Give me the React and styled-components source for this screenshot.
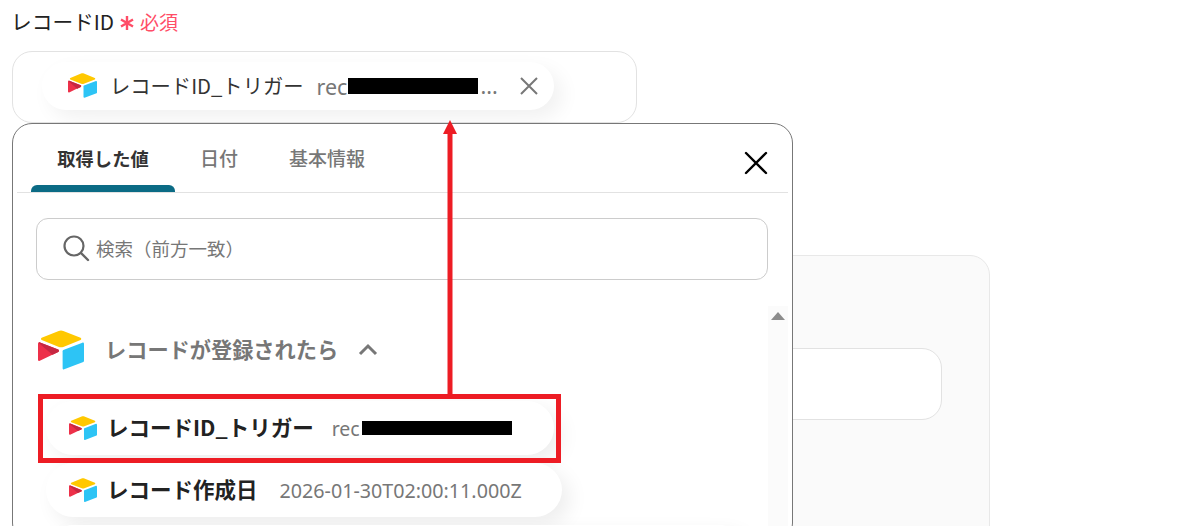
import React from 'react'
import styled, { createGlobalStyle } from 'styled-components'

const GlobalStyle = createGlobalStyle`
  html, body {
    margin: 0;
    height: 526px;
    overflow: hidden;
    background: #fff;
  }
  body {
    font-family: "Noto Sans CJK JP", "Noto Sans", sans-serif;
    color: #222;
  }
  * {
    box-sizing: border-box;
  }
`

const Page = styled.div`
  position: relative;
  width: 1198px;
  height: 526px;
  padding: 8px 12px 0;
  overflow: hidden;
`

const Label = styled.div`
  display: flex;
  align-items: center;
  gap: 5px;
  height: 27px;
  margin-left: -1px;
  font-size: 20.7px;
  line-height: 27px;
`

const Required = styled.span`
  display: flex;
  align-items: center;
  gap: 5px;
  color: #ff4d67;
  font-size: 19px;
`

const Asterisk = styled.svg`
  width: 16px;
  height: 16px;
  margin-top: 3px;
`

const FieldBlock = styled.div`
  position: relative;
  margin-top: 16px;
  width: 625px;
`

const Field = styled.div`
  height: 72px;
  padding: 10px 29px;
  background: #fff;
  border: 1px solid #e2e2e2;
  border-radius: 20px;
`

const Chip = styled.div`
  display: flex;
  align-items: center;
  width: 512px;
  height: 48px;
  padding-left: 26px;
  background: #fff;
  border-radius: 24px;
  box-shadow: 8px 8px 20px rgba(0, 0, 0, 0.06);
`

const ChipName = styled.span`
  margin: 0 0 3px 13px;
  font-size: 20.3px;
  color: #333;
  white-space: nowrap;
`

const Value = styled.span`
  display: flex;
  align-items: center;
  margin-left: ${(p) => p.$gap}px;
  font-family: "Noto Sans", sans-serif;
  font-size: ${(p) => p.$size}px;
  color: #777;
  white-space: nowrap;
`

const Redacted = styled.span`
  display: block;
  width: ${(p) => p.$width}px;
  height: ${(p) => p.$height}px;
  margin-left: ${(p) => p.$inset}px;
  background: #000;
`

const Dots = styled.span`
  margin-left: 2px;
  line-height: 1;
`

const ChipClose = styled.svg`
  width: 20px;
  height: 20px;
  margin-left: 21px;
  flex: none;
`

const Popover = styled.div`
  position: absolute;
  z-index: 2;
  top: 72px;
  left: 0;
  width: 781px;
  height: 420px;
  background: #fff;
  border: 1px solid #777;
  border-radius: 20px;
  padding: 0 4px;
`

const TabBar = styled.div`
  position: relative;
  display: flex;
  align-items: flex-end;
  height: 69px;
  border-bottom: 1px solid #e2e2e2;
`

const Tabs = styled.div`
  display: flex;
  padding-left: 14px;
`

const Tab = styled.div`
  position: relative;
  width: ${(p) => p.$width}px;
  height: 68px;
  padding-top: 20px;
  text-align: center;
  font-size: ${(p) => (p.$active ? 18.3 : 19)}px;
  line-height: 28px;
  font-weight: ${(p) => (p.$active ? 700 : 500)};
  color: ${(p) => (p.$active ? '#333' : '#777')};

  &::after {
    content: "";
    display: ${(p) => (p.$active ? 'block' : 'none')};
    position: absolute;
    left: 0;
    right: 0;
    bottom: 0;
    height: 7px;
    background: #0b6b85;
    border-radius: 6px 6px 0 0;
  }
`

const PopoverClose = styled.svg`
  position: absolute;
  top: 27px;
  right: 20px;
  width: 24px;
  height: 24px;
`

const SearchBox = styled.div`
  display: flex;
  align-items: center;
  gap: 6px;
  width: 732px;
  height: 62px;
  margin: 25px 0 0 19px;
  padding: 0 0 2px 25px;
  border: 1px solid #ccc;
  border-radius: 12px;
  font-size: 18.5px;
  color: #777;
`

const SearchIcon = styled.svg`
  width: 28px;
  height: 28px;
`

const ListArea = styled.div`
  position: relative;
  display: flow-root;
  margin-top: 26px;
  height: 220px;
`

const Scrollbar = styled.div`
  position: absolute;
  top: 0;
  right: 0;
  width: 20px;
  height: 100%;
  background: #fbfbfb;
  display: flex;
  justify-content: center;
  padding-top: 6px;
`

const ScrollUp = styled.div`
  width: 0;
  height: 0;
  border-left: 7px solid transparent;
  border-right: 7px solid transparent;
  border-bottom: 8px solid #8c8c8c;
`

const SectionHeader = styled.div`
  display: flex;
  align-items: center;
  height: 50px;
  margin: 19px 0 0 21px;
  font-size: 21.2px;
  font-weight: 700;
  color: #777;
`

const SectionTitle = styled.span`
  margin: 0 0 3px 21px;
`

const Chevron = styled.svg`
  width: 22px;
  height: 22px;
  margin-left: 19px;
`

const Rows = styled.div`
  display: flex;
  flex-direction: column;
  gap: 8px;
  margin: 26px 0 0 29px;
`

const Row = styled.div`
  display: flex;
  align-items: center;
  width: ${(p) => p.$width}px;
  height: 54px;
  padding-left: 23px;
  flex: none;
  background: #fff;
  border-radius: 27px;
  box-shadow: 8px 8px 20px rgba(0, 0, 0, 0.07);
`

const RowName = styled.span`
  margin: 0 0 3px 10px;
  font-size: 21.5px;
  font-weight: 700;
  color: #222;
  white-space: nowrap;
`

const Backdrop = styled.div`
  width: 978px;
  height: 340px;
  margin-top: 132px;
  padding: 92px 47px 0 0;
  background: #fafafa;
  border: 1px solid #e8e8e8;
  border-radius: 20px;
`

const BackdropInput = styled.div`
  height: 72px;
  background: #fff;
  border: 1px solid #e2e2e2;
  border-radius: 20px;
`

const Annotation = styled.svg`
  position: absolute;
  z-index: 3;
  top: 115px;
  left: 440px;
  width: 20px;
  height: 285px;
`

const Highlight = styled.div`
  position: absolute;
  z-index: 3;
  top: 394px;
  left: 38px;
  width: 523px;
  height: 69px;
  border: 5px solid #ed1c24;
`

function AirtableLogo ({ size }) {
  return (
    <svg width={size} height={size * 0.87} viewBox="0 0 200 174" style={{ flex: 'none' }}>
      <path fill="#ffc800" d="M90 4 16 34c-4 2-4 8 0 10l75 30c6 2 13 2 19 0l75-30c4-2 4-8 0-10L110 4c-6-3-14-3-20 0z" />
      <path fill="#2dc4f5" d="M107 92v74c0 4 4 6 7 5l83-32c2-1 3-3 3-5V60c0-4-4-6-7-5l-83 32c-2 1-3 3-3 5z" />
      <path fill="#ed3049" d="M88 96 63 108l-3 1-52 25c-3 2-8-1-8-5V59c0-1 1-3 2-4s1-1 2-1c1-1 3-1 5 0l79 31c4 2 4 9 0 11z" />
      <path fill="#c62842" d="M88 96 63 108 2 55c1-1 1-1 2-1 1-1 3-1 5 0l79 31c4 2 4 9 0 11z" />
    </svg>
  )
}

export default function App () {
  return (
    <Page>
      <GlobalStyle />
      <Label>
        レコードID
        <Required>
          <Asterisk viewBox="0 0 16 16">
            <path d="M8 1v14M2 4.5l12 7M14 4.5l-12 7" stroke="#ff4d67" strokeWidth="2.4" fill="none" />
          </Asterisk>
          必須
        </Required>
      </Label>
      <FieldBlock>
        <Field>
          <Chip>
            <AirtableLogo size={29} />
            <ChipName>レコードID_トリガー</ChipName>
            <Value $gap={13} $size={21.5}>
              rec<Redacted $inset={1} $width={130} $height={16} /><Dots>...</Dots>
            </Value>
            <ChipClose viewBox="0 0 20 20">
              <path d="M2 2l16 16M18 2 2 18" stroke="#777" strokeWidth="2" fill="none" />
            </ChipClose>
          </Chip>
        </Field>
        <Popover>
          <TabBar>
            <Tabs>
              <Tab $active $width={144}>取得した値</Tab>
              <Tab $width={88}>日付</Tab>
              <Tab $width={128}>基本情報</Tab>
            </Tabs>
            <PopoverClose viewBox="0 0 24 24">
              <path d="M2 2l20 20M22 2 2 22" stroke="#000" strokeWidth="2.4" strokeLinecap="round" fill="none" />
            </PopoverClose>
          </TabBar>
          <SearchBox>
            <SearchIcon viewBox="0 0 28 28">
              <circle cx="12" cy="12" r="9.5" stroke="#666" strokeWidth="2.2" fill="none" />
              <path d="M19 19l7 7" stroke="#666" strokeWidth="2.4" strokeLinecap="round" />
            </SearchIcon>
            検索（前方一致）
          </SearchBox>
          <ListArea>
            <Scrollbar><ScrollUp /></Scrollbar>
            <SectionHeader>
              <AirtableLogo size={46} />
              <SectionTitle>レコードが登録されたら</SectionTitle>
              <Chevron viewBox="0 0 22 22">
                <path d="M3 15l8-8 8 8" stroke="#777" strokeWidth="3" fill="none" />
              </Chevron>
            </SectionHeader>
            <Rows>
              <Row $width={508}>
                <AirtableLogo size={28} />
                <RowName>レコードID_トリガー</RowName>
                <Value $gap={18} $size={19.5}>
                  rec<Redacted $inset={2} $width={150} $height={14} />
                </Value>
              </Row>
              <Row $width={516}>
                <AirtableLogo size={28} />
                <RowName>レコード作成日</RowName>
                <Value $gap={22} $size={19.7}>2026-01-30T02:00:11.000Z</Value>
              </Row>
              <Row $width={700} />
            </Rows>
          </ListArea>
        </Popover>
      </FieldBlock>
      <Backdrop>
        <BackdropInput />
      </Backdrop>
      <Annotation viewBox="0 0 20 285">
        <path d="M10 15v264" stroke="#ed1c24" strokeWidth="5" fill="none" />
        <path d="M10 5l7 14H3z" fill="#ed1c24" />
      </Annotation>
      <Highlight />
    </Page>
  )
}
